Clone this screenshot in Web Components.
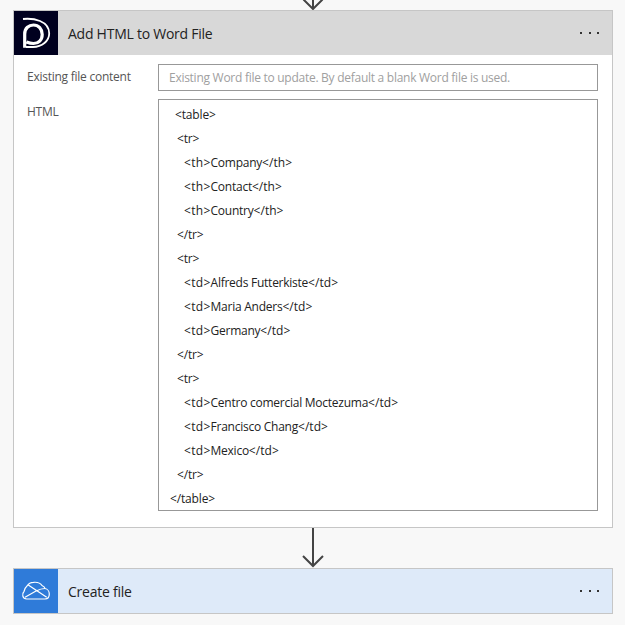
<!DOCTYPE html>
<html>
<head>
<meta charset="utf-8">
<title>Flow</title>
<style>
  html, body { margin: 0; height: 100%; overflow: hidden; }
  body {
    background: #f8f8f8;
    font-family: "Open Sans", "Liberation Sans", sans-serif;
    font-size: 12px;
    letter-spacing: -0.25px;
  }
  .flow { display: flex; flex-direction: column; width: 600px; margin-left: 13px; }
</style>
</head>
<body>
<div class="flow">
  <c-arrow top></c-arrow>
  <c-step title-text="Add HTML to Word File" tint="#d8d8d8" icon-bg="#00001f">
    <c-logo slot="icon" kind="plumsail"></c-logo>
    <c-field label="Existing file content" placeholder="Existing Word file to update. By default a blank Word file is used."></c-field>
    <c-field label="HTML" tall>
      <c-line indent="16">&lt;table&gt;</c-line>
      <c-line indent="18">&lt;tr&gt;</c-line>
      <c-line indent="25">&lt;th&gt;Company&lt;/th&gt;</c-line>
      <c-line indent="25">&lt;th&gt;Contact&lt;/th&gt;</c-line>
      <c-line indent="25">&lt;th&gt;Country&lt;/th&gt;</c-line>
      <c-line indent="18">&lt;/tr&gt;</c-line>
      <c-line indent="18">&lt;tr&gt;</c-line>
      <c-line indent="25">&lt;td&gt;Alfreds Futterkiste&lt;/td&gt;</c-line>
      <c-line indent="25">&lt;td&gt;Maria Anders&lt;/td&gt;</c-line>
      <c-line indent="25">&lt;td&gt;Germany&lt;/td&gt;</c-line>
      <c-line indent="18">&lt;/tr&gt;</c-line>
      <c-line indent="18">&lt;tr&gt;</c-line>
      <c-line indent="25">&lt;td&gt;Centro comercial Moctezuma&lt;/td&gt;</c-line>
      <c-line indent="25">&lt;td&gt;Francisco Chang&lt;/td&gt;</c-line>
      <c-line indent="25">&lt;td&gt;Mexico&lt;/td&gt;</c-line>
      <c-line indent="18">&lt;/tr&gt;</c-line>
      <c-line indent="11">&lt;/table&gt;</c-line>
    </c-field>
  </c-step>
  <c-arrow></c-arrow>
  <c-step title-text="Create file" tint="#deeaf9" icon-bg="#2f7bd9" collapsed>
    <c-logo slot="icon" kind="onedrive"></c-logo>
  </c-step>
</div>

<script>
const logos = {
  plumsail: `
    <svg width="44" height="44" viewBox="0 0 44 44" fill="none" stroke="#fff">
      <path d="M10.700 36.700 V23 C10.700 17 15 14 19.500 14 C24.500 14 28.200 18 28.200 23.500 C28.200 29 24.500 32.500 19.500 32.500 C17 32.500 15 32 12.500 31" stroke-width="3.200"/>
      <path d="M9 8 C14 7.500 21 8 26 10 C32 12.500 35.200 17 35.200 22.500 C35.200 30 28 36 19 36 H12" stroke-width="1.800"/>
    </svg>`,
  onedrive: `
    <svg width="44" height="44" viewBox="0 0 44 44" fill="none" stroke="#fff" stroke-width="1.200">
      <path d="M12.700 30 C8.500 30 7.500 25 10 22.500 C10.500 20.500 11 18.500 13 17 C14.500 14.500 17 13.300 19.500 13.300 C23 13 26.500 14 28 16.500 C30 17.500 31 18.500 31 19.500 C33.500 20 35.300 22.500 35.300 25 C35.300 28 33.500 30 31 30 Z"/>
      <path d="M11 28.300 L22 22 C25 20.500 28 19.500 31 19.500 M14.300 16 L32.700 28.300"/>
    </svg>`
}

class CLogo extends HTMLElement {
  constructor() {
    super()
    this.attachShadow({ mode: 'open' })
    this.shadowRoot.innerHTML = `
      <style>:host { display: block; width: 44px; height: 44px; } svg { display: block; }</style>
      ${logos[this.getAttribute('kind')]}
    `
  }
}
customElements.define('c-logo', CLogo)

class CArrow extends HTMLElement {
  constructor() {
    super()
    this.attachShadow({ mode: 'open' })
    const top = this.hasAttribute('top')
    const h = top ? 10 : 40
    const path = top
      ? 'M20 0 V9 M10.500 -0.500 L20 9 L29.500 -0.500'
      : 'M20 0 V38 M10 28 L20 38 L30 28'
    this.shadowRoot.innerHTML = `
      <style>:host { display: flex; justify-content: center; } svg { display: block; }</style>
      <svg width="40" height="${h}" viewBox="0 0 40 ${h}" fill="none" stroke="#444" stroke-width="2"><path d="${path}"/></svg>
    `
  }
}
customElements.define('c-arrow', CArrow)

class CStep extends HTMLElement {
  constructor() {
    super()
    this.attachShadow({ mode: 'open' })
    const body = this.hasAttribute('collapsed') ? '' : '<div class="body"><slot></slot></div>'
    this.shadowRoot.innerHTML = `
      <style>
        :host { display: block; border: 1px solid #c6c6c6; background: #fff; }
        .head { display: flex; align-items: center; height: 44px; background: ${this.getAttribute('tint')}; }
        .icon { width: 44px; height: 44px; background: ${this.getAttribute('icon-bg')}; flex: none; }
        .title { flex: 1; margin-left: 10px; font-size: 14px; color: #222; }
        svg.more { display: block; margin-right: 13px; }
        .body { display: flex; flex-direction: column; gap: 8px; padding: 9px 14px 16px 13px; }
      </style>
      <div class="head">
        <div class="icon"><slot name="icon"></slot></div>
        <div class="title">${this.getAttribute('title-text')}</div>
        <svg class="more" width="19" height="2" viewBox="0 0 19 2" fill="#333">
          <rect x="0" y="0" width="2" height="2"/><rect x="9" y="0" width="2" height="2"/><rect x="17" y="0" width="2" height="2"/>
        </svg>
      </div>
      ${body}
    `
  }
}
customElements.define('c-step', CStep)

class CField extends HTMLElement {
  constructor() {
    super()
    this.attachShadow({ mode: 'open' })
    const placeholder = this.getAttribute('placeholder')
    const inner = placeholder
      ? `<div class="hint">${placeholder}</div>`
      : '<slot></slot>'
    this.shadowRoot.innerHTML = `
      <style>
        :host { display: flex; align-items: flex-start; }
        .label { width: 131px; flex: none; color: #555; line-height: 26px; }
        .box { flex: 1; border: 1px solid #989898; box-sizing: border-box; min-height: 27px; }
        :host([tall]) .box { padding: 2px 0 0; height: 412px; }
        .hint { color: #a0a0a0; line-height: 25px; padding-left: 10px; white-space: nowrap; letter-spacing: -0.27px; }
      </style>
      <div class="label">${this.getAttribute('label')}</div>
      <div class="box">${inner}</div>
    `
  }
}
customElements.define('c-field', CField)

class CLine extends HTMLElement {
  constructor() {
    super()
    this.attachShadow({ mode: 'open' })
    this.shadowRoot.innerHTML = `
      <style>
        :host { display: block; height: 24px; line-height: 26px; color: #222; white-space: nowrap; letter-spacing: -0.15px; }
      </style>
      <slot></slot>
    `
    this.style.paddingLeft = this.getAttribute('indent') + 'px'

    // cell lines: angle brackets run wider than the cell text
    const m = this.textContent.match(/^<(t[hd])>(.*)<\/t[hd]>$/)
    if (m) {
      const esc = (s) => s.replace(/</g, '&lt;').replace(/>/g, '&gt;')
      this.innerHTML =
        `<span style="letter-spacing:.3px">${esc('<' + m[1] + '>')}</span>` +
        `<span style="letter-spacing:-.25px">${m[2]}</span>` +
        `<span style="letter-spacing:.05px">${esc('</' + m[1] + '>')}</span>`
    }
  }
}
customElements.define('c-line', CLine)
</script>
</body>
</html>
